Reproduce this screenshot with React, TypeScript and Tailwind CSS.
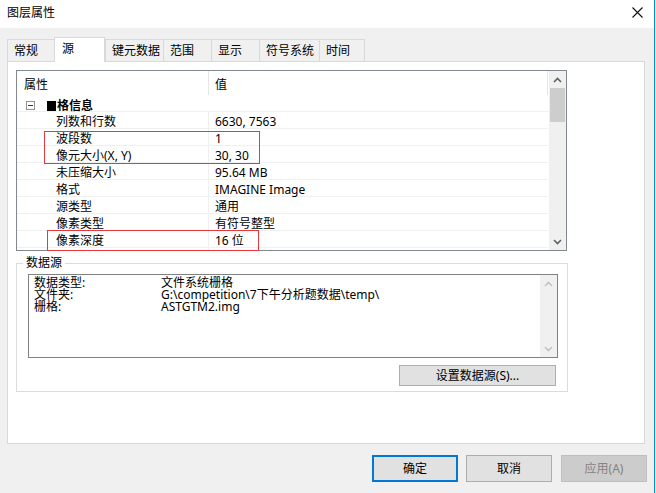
import React from "react";

const rows: [string, string][] = [
  ["列数和行数", "6630, 7563"],
  ["波段数", "1"],
  ["像元大小(X, Y)", "30, 30"],
  ["未压缩大小", "95.64 MB"],
  ["格式", "IMAGINE Image"],
  ["源类型", "通用"],
  ["像素类型", "有符号整型"],
  ["像素深度", "16 位"],
  ["", ""],
];

const tabs: { label: string; w: string; selected?: boolean }[] = [
  { label: "常规", w: "w-[47px]" },
  { label: "源", w: "w-[51px]", selected: true },
  { label: "键元数据", w: "w-[58px]" },
  { label: "范围", w: "w-[48px]" },
  { label: "显示", w: "w-[48px]" },
  { label: "符号系统", w: "w-[60px]" },
  { label: "时间", w: "w-[46px]" },
];

function Chevron({ up, color }: { up?: boolean; color: string }) {
  return (
    <svg width="9" height="6" viewBox="0 0 9 6">
      <polyline
        points={up ? "1,5 4.5,1.5 8,5" : "1,1 4.5,4.5 8,1"}
        fill="none"
        stroke={color}
        strokeWidth="1.6"
      />
    </svg>
  );
}

export default function App() {
  return (
    <div className="w-[656px] h-[493px] flex bg-white font-['Noto_Sans','Noto_Sans_CJK_SC',sans-serif] text-[12px] text-black overflow-hidden">
      <div className="w-[654px] h-full flex flex-col bg-[#f0f0f0]">
        {/* title bar */}
        <div className="h-[28px] bg-white flex items-center justify-between pl-[7px] pr-[11px] shrink-0">
          <span className="leading-[14px] -mt-[3px]">图层属性</span>
          <svg width="11" height="11" viewBox="0 0 11 11" className="-mt-[4px]">
            <path d="M0.5 0.5 L10.5 10.5 M10.5 0.5 L0.5 10.5" stroke="#111" strokeWidth="1.1" />
          </svg>
        </div>

        {/* body */}
        <div className="flex flex-col px-[7px] pt-[9px]">
          {/* tabs */}
          <div className="flex items-end h-[24px]">
            {tabs.map((t, i) =>
              t.selected ? (
                <div
                  key={t.label}
                  className={`${t.w} h-[25px] -mb-px relative z-10 bg-white border-t border-l border-r border-[#d9d9d9] pl-[7px] pt-[2px] leading-[18px]`}
                >
                  {t.label}
                </div>
              ) : (
                <div
                  key={t.label}
                  className={`${t.w} h-[22px] border-t border-l ${i === tabs.length - 1 ? "border-r" : ""} border-[#d9d9d9] pl-[6px] pt-[2px] leading-[18px]`}
                >
                  {t.label}
                </div>
              )
            )}
          </div>

          {/* tab panel */}
          <div className="w-[638px] h-[383px] bg-white border border-[#d9d9d9] pt-[8px] pl-[8px] flex flex-col">
            {/* property grid */}
            <div className="relative w-[551px] h-[181px] border border-[#828790] flex overflow-visible">
              <div className="w-[532px] h-full overflow-hidden flex flex-col">
                <div className="h-[24px] flex shrink-0">
                  <div className="w-[192px] border-r border-[#e5e5e5] pl-[7px] pt-[7px] leading-[14px]">属性</div>
                  <div className="flex-1 pl-[6px] pt-[7px] leading-[14px] border-r border-[#e5e5e5] mr-[1px]">值</div>
                </div>
                <div className="h-[17px] flex shrink-0 border-b border-[#f0f0f0]">
                  <div className="w-[192px] flex items-start pl-[9px] pt-[6px]">
                    <div className="w-[9px] h-[9px] border border-[#919191] flex items-center justify-center">
                      <div className="w-[5px] h-px bg-[#333]" />
                    </div>
                    <span className="ml-[12px] -mt-[2px] font-bold leading-[14px] flex items-center">
                      <span className="inline-block w-[9px] h-[10px] bg-black mr-[1px]" />
                      格信息
                    </span>
                  </div>
                  <div className="flex-1" />
                </div>
                {rows.map(([k, v], i) => (
                  <div key={i} className="h-[17px] flex shrink-0 border-b border-[#f0f0f0] mr-[1px]">
                    <div className="w-[192px] border-r border-[#f0f0f0] pl-[39px] pt-[4px] leading-[12px] whitespace-nowrap">{k}</div>
                    <div className="flex-1 pl-[6px] pt-[4px] leading-[12px] whitespace-nowrap">{v}</div>
                  </div>
                ))}
              </div>
              {/* scrollbar */}
              <div className="w-[17px] h-full bg-[#f0f0f0] flex flex-col">
                <div className="h-[17px] flex items-center justify-center">
                  <Chevron up color="#606060" />
                </div>
                <div className="h-[34px] bg-[#cdcdcd] mx-[1px]" />
                <div className="flex-1" />
                <div className="h-[17px] flex items-center justify-center">
                  <Chevron color="#606060" />
                </div>
              </div>

              {/* red annotation boxes */}
              <div className="absolute left-[27px] top-[60px] w-[216px] h-[33px] border-[1.5px] border-[#e8383d] pointer-events-none" />
              <div className="absolute left-[30px] top-[159px] w-[212px] h-[21px] border-[1.5px] border-[#e8383d] pointer-events-none" />
            </div>

            {/* data source group */}
            <fieldset className="mt-[5px] w-[552px] h-[136px] border border-[#dcdcdc] flex flex-col">
              <legend className="ml-[6px] px-[3px] leading-[14px]">数据源</legend>
              <div className="ml-[11px] mt-[4px] w-[530px] h-[84px] border border-[#828282] flex">
                <div className="flex-1 pl-[5px] pt-[2px] text-[12px] leading-[12px]">
                  <div className="flex h-[12px]">
                    <span className="w-[127px]">数据类型:</span>
                    <span>文件系统栅格</span>
                  </div>
                  <div className="flex h-[12px]">
                    <span className="w-[127px]">文件夹:</span>
                    <span>G:\competition\7下午分析题数据\temp\</span>
                  </div>
                  <div className="flex h-[12px]">
                    <span className="w-[127px]">栅格:</span>
                    <span>ASTGTM2.img</span>
                  </div>
                </div>
                <div className="w-[17px] h-full bg-[#f0f0f0] flex flex-col justify-between">
                  <div className="h-[17px] flex items-center justify-center">
                    <Chevron up color="#c2c2c2" />
                  </div>
                  <div className="h-[17px] flex items-center justify-center">
                    <Chevron color="#c2c2c2" />
                  </div>
                </div>
              </div>
              <div className="flex justify-end pr-[11px] mt-[7px]">
                <button className="w-[157px] h-[21px] bg-[#e1e1e1] border border-[#adadad] leading-[18px] text-[12px]">
                  设置数据源(S)...
                </button>
              </div>
            </fieldset>
          </div>

          {/* bottom buttons */}
          <div className="flex justify-end mt-[11px] pr-0">
            <button className="w-[86px] h-[27px] bg-[#e1e1e1] border-2 border-[#0078d7] text-[12px]">确定</button>
            <button className="ml-[8px] w-[86px] h-[27px] bg-[#e1e1e1] border border-[#adadad] text-[12px]">取消</button>
            <button className="ml-[9px] w-[86px] h-[27px] bg-[#cccccc] border border-[#bfbfbf] text-[#838383] text-[12px]">应用(A)</button>
          </div>
        </div>
      </div>
      <div className="w-px h-full bg-[#1a82d6]" />
      <div className="w-px h-full bg-[#f0f0f0]" />
    </div>
  );
}
